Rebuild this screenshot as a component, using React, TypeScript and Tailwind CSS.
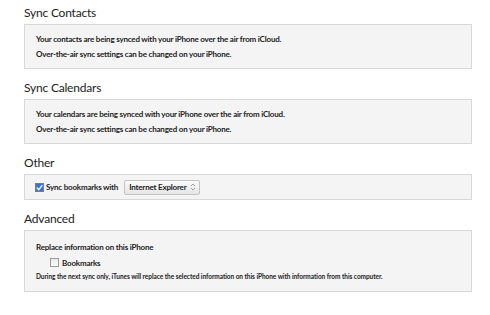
import React from "react";

const font = { fontFamily: 'Lato, "Noto Sans", sans-serif' };

const Heading: React.FC<{ label: string; first?: boolean }> = ({ label, first }) => (
  <h2
    className={`text-[12px] tracking-[-0.2px] leading-[20px] text-[#222] ${first ? "pt-[3px] h-[24px]" : "pt-[9px] h-[30px]"}`}
  >
    {label}
  </h2>
);

const Panel: React.FC<{ className?: string; children: React.ReactNode }> = ({
  className = "",
  children,
}) => (
  <div className={`border border-[#d8d8d8] bg-[#f4f4f4] ${className}`}>{children}</div>
);

const CheckedBox = () => (
  <svg width="9" height="9" viewBox="0 0 9 9" className="shrink-0">
    <rect x="0.5" y="0.5" width="8" height="8" fill="#3b74c4" stroke="#6b7f99" />
    <path d="M1.8 4.6 L3.8 6.6 L7.3 2.2" fill="none" stroke="#e8eef8" strokeWidth="1.5" />
  </svg>
);

const EmptyBox = () => (
  <span className="block w-[9px] h-[9px] shrink-0 border border-[#9a9a9a] bg-gradient-to-b from-[#e9e9e9] to-[#fdfdfd]" />
);

const Stepper = () => (
  <svg width="6" height="8" viewBox="0 0 6 8" className="shrink-0">
    <path d="M1 3 L3 1 L5 3" fill="none" stroke="#999" strokeWidth="0.9" />
    <path d="M1 5 L3 7 L5 5" fill="none" stroke="#999" strokeWidth="0.9" />
  </svg>
);

export default function App() {
  return (
    <div className="w-[490px] h-[315px] bg-white pl-[24px] pr-[18px]" style={font}>
      <Heading label="Sync Contacts" first />
      <Panel className="px-[11px] pt-[7px] pb-[6px] text-[8px] tracking-[-0.2px] font-bold leading-[15px] text-[#222]">
        <p>Your contacts are being synced with your iPhone over the air from iCloud.</p>
        <p>Over-the-air sync settings can be changed on your iPhone.</p>
      </Panel>

      <Heading label="Sync Calendars" />
      <Panel className="px-[11px] pt-[7px] pb-[6px] text-[8px] tracking-[-0.2px] font-bold leading-[15px] text-[#222]">
        <p>Your calendars are being synced with your iPhone over the air from iCloud.</p>
        <p>Over-the-air sync settings can be changed on your iPhone.</p>
      </Panel>

      <Heading label="Other" />
      <Panel className="h-[26px] pl-[10px] flex items-center gap-[2px] text-[8px] tracking-[-0.2px] font-bold text-[#222]">
        <CheckedBox />
        <span className="mr-[4px]">Sync bookmarks with</span>
        <div className="h-[15px] flex items-center gap-[4px] pl-[4px] pr-[3px] rounded-[2px] border border-[#c4c4c4] bg-gradient-to-b from-[#fafafa] to-[#e6e6e6]">
          <span>Internet Explorer</span>
          <Stepper />
        </div>
      </Panel>

      <Heading label="Advanced" />
      <Panel className="h-[62px] px-[11px] pt-[9px] text-[#222]">
        <p className="text-[8px] tracking-[-0.2px] font-bold leading-[15px]">Replace information on this iPhone</p>
        <div className="flex items-center gap-[3px] pl-[14px] h-[15px] text-[8px] tracking-[-0.2px] font-bold">
          <EmptyBox />
          <span>Bookmarks</span>
        </div>
        <p className="text-[6.5px] tracking-[-0.05px] font-bold leading-[14px]">
          During the next sync only, iTunes will replace the selected information on this iPhone with
          information from this computer.
        </p>
      </Panel>
    </div>
  );
}
